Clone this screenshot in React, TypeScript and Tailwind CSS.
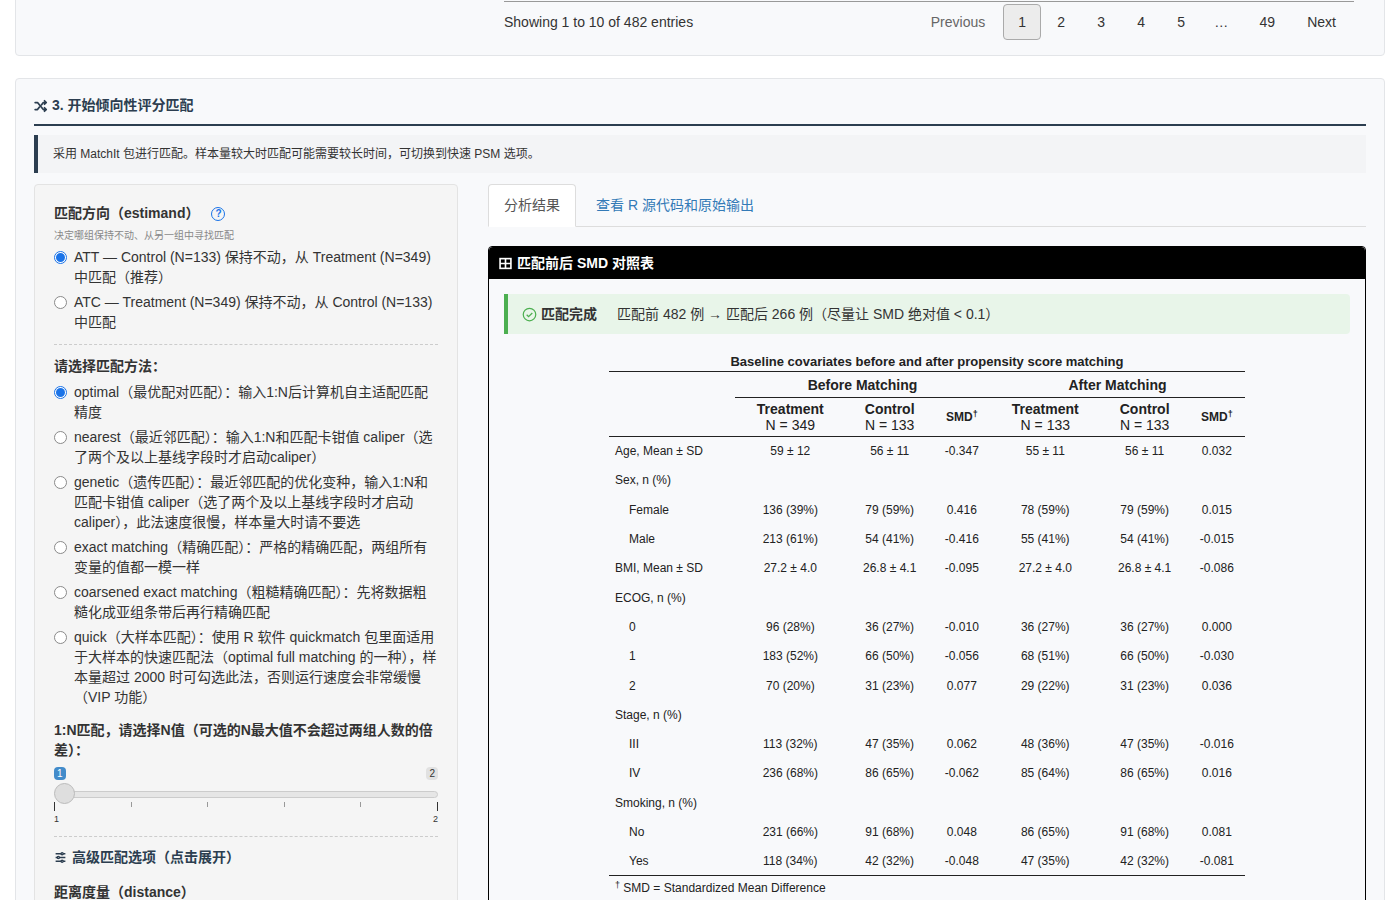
import React from "react";

const rows: (string | string[])[] = [
  ["Age, Mean ± SD", "59 ± 12", "56 ± 11", "-0.347", "55 ± 11", "56 ± 11", "0.032"],
  "Sex, n (%)",
  ["  Female", "136 (39%)", "79 (59%)", "0.416", "78 (59%)", "79 (59%)", "0.015"],
  ["  Male", "213 (61%)", "54 (41%)", "-0.416", "55 (41%)", "54 (41%)", "-0.015"],
  ["BMI, Mean ± SD", "27.2 ± 4.0", "26.8 ± 4.1", "-0.095", "27.2 ± 4.0", "26.8 ± 4.1", "-0.086"],
  "ECOG, n (%)",
  ["  0", "96 (28%)", "36 (27%)", "-0.010", "36 (27%)", "36 (27%)", "0.000"],
  ["  1", "183 (52%)", "66 (50%)", "-0.056", "68 (51%)", "66 (50%)", "-0.030"],
  ["  2", "70 (20%)", "31 (23%)", "0.077", "29 (22%)", "31 (23%)", "0.036"],
  "Stage, n (%)",
  ["  III", "113 (32%)", "47 (35%)", "0.062", "48 (36%)", "47 (35%)", "-0.016"],
  ["  IV", "236 (68%)", "86 (65%)", "-0.062", "85 (64%)", "86 (65%)", "0.016"],
  "Smoking, n (%)",
  ["  No", "231 (66%)", "91 (68%)", "0.048", "86 (65%)", "91 (68%)", "0.081"],
  ["  Yes", "118 (34%)", "42 (32%)", "-0.048", "47 (35%)", "42 (32%)", "-0.081"],
];

function Radio({ on }: { on?: boolean }) {
  return on ? (
    <span className="mt-[4px] w-[13px] h-[13px] shrink-0 rounded-full border border-[#1a73e8] bg-white flex items-center justify-center">
      <span className="w-[9px] h-[9px] rounded-full bg-[#1a73e8]" />
    </span>
  ) : (
    <span className="mt-[4px] w-[13px] h-[13px] shrink-0 rounded-full border border-[#8a8a8a] bg-white" />
  );
}

const methods: [boolean, string][] = [
  [true, "optimal（最优配对匹配）：输入1:N后计算机自主适配匹配精度"],
  [false, "nearest（最近邻匹配）：输入1:N和匹配卡钳值 caliper（选了两个及以上基线字段时才启动caliper）"],
  [false, "genetic（遗传匹配）：最近邻匹配的优化变种，输入1:N和匹配卡钳值 caliper（选了两个及以上基线字段时才启动caliper），此法速度很慢，样本量大时请不要选"],
  [false, "exact matching（精确匹配）：严格的精确匹配，两组所有变量的值都一模一样"],
  [false, "coarsened exact matching（粗糙精确匹配）：先将数据粗糙化成亚组条带后再行精确匹配"],
  [false, "quick（大样本匹配）：使用 R 软件 quickmatch 包里面适用于大样本的快速匹配法（optimal full matching 的一种），样本量超过 2000 时可勾选此法，否则运行速度会非常缓慢（VIP 功能）"],
];

export default function App() {
  const font = { fontFamily: '"Helvetica Neue", "Liberation Sans", Arial, "Noto Sans CJK SC", sans-serif' };
  return (
    <div className="w-[1400px] h-[900px] overflow-hidden bg-white text-[#333] text-[14px]" style={font}>
      <div className="mx-[15px] mt-[-10px] h-[66px] border border-[#e3e5e8] rounded-b bg-[#f8f9fb] relative">
        <div className="absolute left-[488px] right-[30px] top-[10px] border-t border-[#999]" />
        <div className="absolute left-[488px] top-[21px] text-[14px] text-[#333]">Showing 1 to 10 of 482 entries</div>
        <div className="absolute right-[48px] top-[13px] flex items-center text-[14px] text-[#333]">
          <span className="px-[12px] text-[#666]">Previous</span>
          <span className="w-[38px] h-[36px] border border-[#aaa] bg-[#ececec] rounded-sm flex items-center justify-center ml-[6px]">1</span>
          {["2", "3", "4", "5", "…"].map((n) => (
            <span key={n} className="w-[40px] text-center">{n}</span>
          ))}
          <span className="w-[52px] text-center">49</span>
          <span className="pl-[14px]">Next</span>
        </div>
      </div>

      <div className="mx-[15px] mt-[22px] border border-[#e3e5e8] rounded bg-[#f8f9fb] px-[18px] pt-[16px] h-[900px]">
        <div className="flex items-center gap-[4px] text-[#2c3e50] font-bold text-[14px] pb-[8px] border-b-2 border-[#2c3e50]">
          <svg width="14" height="14" viewBox="0 0 24 24" fill="none" stroke="#2c3e50" strokeWidth="3" strokeLinecap="round" strokeLinejoin="round">
            <path d="M2 6h4l10 12h5M2 18h4l3-4M13 10l3-4h5M18 3l3 3-3 3M18 15l3 3-3 3" />
          </svg>
          3. 开始倾向性评分匹配
        </div>
        <div className="mt-[9px] border-l-4 border-[#2c3e50] bg-[#f3f4f6] px-[15px] py-[10px] text-[12px] text-[#333]">
          采用 MatchIt 包进行匹配。样本量较大时匹配可能需要较长时间，可切换到快速 PSM 选项。
        </div>

        <div className="flex mt-[11px] gap-[30px]">
          <div className="w-[424px] shrink-0 bg-[#f5f5f5] border border-[#e3e3e3] rounded px-[19px] pt-[18px] h-[800px]">
            <div className="flex items-center font-bold text-[14px] text-[#333]">
              匹配方向（estimand）
              <span className="ml-[12px] w-[14px] h-[14px] rounded-full border-[1.5px] border-[#1a73e8] text-[#1a73e8] text-[10px] flex items-center justify-center font-bold">?</span>
            </div>
            <div className="text-[10px] text-[#888] mt-[4px]">决定哪组保持不动、从另一组中寻找匹配</div>
            <div className="mt-[4px] flex gap-[7px] leading-[20px]"><Radio on /><span>ATT — Control (N=133) 保持不动，从 Treatment (N=349) 中匹配（推荐）</span></div>
            <div className="mt-[5px] flex gap-[7px] leading-[20px]"><Radio /><span>ATC — Treatment (N=349) 保持不动，从 Control (N=133) 中匹配</span></div>
            <div className="border-t border-dashed border-[#ccc] mt-[12px]" />
            <div className="font-bold mt-[11px]">请选择匹配方法：</div>
            {methods.map(([on, t], i) => (
              <div key={i} className="mt-[5px] flex gap-[7px] leading-[20px] text-[14px]"><Radio on={on} /><span>{t}</span></div>
            ))}
            <div className="font-bold mt-[13px] leading-[20px]">1:N匹配，请选择N值（可选的N最大值不会超过两组人数的倍差）：</div>
            <div className="relative h-[66px] mt-[5px]">
              <span className="absolute left-0 top-[2px] bg-[#428bca] text-white text-[10px] px-[3px] rounded-sm leading-[13px]">1</span>
              <span className="absolute right-0 top-[2px] bg-[#e1e1e1] text-[#333] text-[10px] px-[3px] rounded-sm leading-[13px]">2</span>
              <div className="absolute left-[2px] right-0 top-[26px] h-[7px] rounded bg-[#e6e6e6] border border-[#ccc]" />
              <div className="absolute left-0 top-[18px] w-[21px] h-[21px] rounded-full bg-[#dedede] border border-[#bbb]" />
              <div className="absolute left-0 right-0 top-[37px] flex justify-between">
                {[0, 1, 2, 3, 4, 5].map((k) => (
                  <span key={k} className={`w-px bg-[#333] ${k === 0 || k === 5 ? "h-[9px]" : "h-[5px] bg-[#999]"}`} />
                ))}
              </div>
              <span className="absolute left-0 top-[48px] text-[9px]">1</span>
              <span className="absolute right-0 top-[48px] text-[9px]">2</span>
            </div>
            <div className="border-t border-dashed border-[#ccc] mt-[5px]" />
            <div className="mt-[10px] flex items-center gap-[5px] font-bold text-[#2c3e50]">
              <svg width="13" height="13" viewBox="0 0 24 24" fill="none" stroke="#2c3e50" strokeWidth="2.5"><path d="M3 5h18M3 12h18M3 19h18" /><circle cx="15" cy="5" r="2" fill="#f5f5f5" /><circle cx="8" cy="12" r="2" fill="#f5f5f5" /><circle cx="15" cy="19" r="2" fill="#f5f5f5" /></svg>
              高级匹配选项（点击展开）
            </div>
            <div className="mt-[14px] font-bold">距离度量（distance）</div>
          </div>

          <div className="flex-1">
            <div className="flex border-b border-[#ddd] h-[43px]">
              <div className="px-[15px] flex items-center border border-[#ddd] border-b-white bg-white rounded-t -mb-px text-[#555]">分析结果</div>
              <div className="px-[20px] flex items-center text-[#337ab7]">查看 R 源代码和原始输出</div>
            </div>
            <div className="mt-[19px] border border-[#000] rounded-t bg-[#f8f9fb] h-[700px]">
              <div className="bg-black text-white font-bold text-[14px] h-[32px] flex items-center px-[10px] gap-[5px] rounded-t">
                <svg width="13" height="13" viewBox="0 0 24 24" fill="none" stroke="white" strokeWidth="3"><rect x="2" y="3" width="20" height="18" /><path d="M2 12h20M12 3v18" /></svg>
                匹配前后 SMD 对照表
              </div>
              <div className="mx-[15px] mt-[15px] h-[40px] bg-[#e8f5e9] border-l-4 border-[#4caf50] rounded-r flex items-center px-[14px] text-[14px]">
                <svg width="15" height="15" viewBox="0 0 24 24" fill="none" stroke="#4caf50" strokeWidth="2"><circle cx="12" cy="12" r="10" /><path d="M7.5 12.5l3 3 6-6" /></svg>
                <span className="font-bold ml-[4px] text-[#333]">匹配完成</span>
                <span className="ml-[20px] text-[#333]">匹配前 482 例 → 匹配后 266 例（尽量让 SMD 绝对值 &lt; 0.1）</span>
              </div>
              <div className="w-[636px] mx-auto mt-[19px] text-[#222]" style={{ fontFamily: '"Liberation Sans", Arial, sans-serif' }}>
                <div className="text-center font-bold text-[13px] leading-[17px]">Baseline covariates before and after propensity score matching</div>
                <table className="w-full border-collapse text-[12px] mt-[1px]">
                  <thead>
                    <tr className="border-t border-[#222]">
                      <th className="w-[126px]" />
                      <th colSpan={3} className="text-[14px] pt-[3px] pb-[1px] border-b border-[#222]">Before Matching</th>
                      <th colSpan={3} className="text-[14px] pt-[3px] pb-[1px] border-b border-[#222]">After Matching</th>
                    </tr>
                    <tr className="border-b border-[#222] text-[14px] leading-[16px]">
                      <th />
                      <th className="py-[3px] font-bold"><div>Treatment</div><div className="font-normal">N = 349</div></th>
                      <th className="font-bold"><div>Control</div><div className="font-normal">N = 133</div></th>
                      <th className="text-[12px]">SMD<sup>†</sup></th>
                      <th className="font-bold"><div>Treatment</div><div className="font-normal">N = 133</div></th>
                      <th className="font-bold"><div>Control</div><div className="font-normal">N = 133</div></th>
                      <th className="text-[12px]">SMD<sup>†</sup></th>
                    </tr>
                  </thead>
                  <tbody>
                    {rows.map((r, i) =>
                      typeof r === "string" ? (
                        <tr key={i} className="h-[29.3px]"><td className="px-[6px]">{r}</td><td colSpan={6} /></tr>
                      ) : (
                        <tr key={i} className={`h-[29.3px] ${i === rows.length - 1 ? "border-b border-[#222]" : ""}`}>
                          <td className={r[0].startsWith("  ") ? "pl-[20px]" : "px-[6px]"}>{r[0].trim()}</td>
                          {r.slice(1).map((c, j) => (
                            <td key={j} className="text-center">{c}</td>
                          ))}
                        </tr>
                      )
                    )}
                  </tbody>
                </table>
                <div className="text-[12px] mt-[3px] ml-[6px]"><sup>†</sup> SMD = Standardized Mean Difference</div>
              </div>
            </div>
          </div>
        </div>
      </div>
    </div>
  );
}
